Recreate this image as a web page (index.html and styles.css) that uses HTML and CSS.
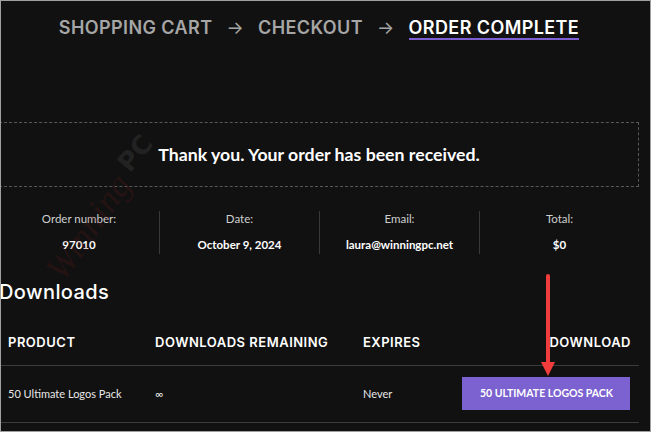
FILE: index.html
```html
<!DOCTYPE html>
<html lang="en">
<head>
  <meta charset="UTF-8" />
  <title>Order Complete</title>
  <link rel="stylesheet" href="styles.css">
</head>
<body>
  <div class="page">
    <nav class="steps">
      <span class="step">Shopping Cart</span>
      <span class="sep">&rarr;</span>
      <span class="step">Checkout</span>
      <span class="sep">&rarr;</span>
      <span class="step active">Order Complete</span>
    </nav>

    <p class="notice">Thank you. Your order has been received.</p>

    <ul class="overview">
      <li>Order number:<strong>97010</strong></li>
      <li>Date:<strong>October 9, 2024</strong></li>
      <li>Email:<strong>laura@winningpc.net</strong></li>
      <li>Total:<strong>$0</strong></li>
    </ul>

    <h2 class="section-title">Downloads</h2>

    <div class="downloads">
      <div class="th">Product</div>
      <div class="th">Downloads remaining</div>
      <div class="th">Expires</div>
      <div class="th th-end">Download</div>

      <div class="td">50 Ultimate Logos Pack</div>
      <div class="td">&infin;</div>
      <div class="td">Never</div>
      <div class="td td-end"><a class="btn" href="#">50 Ultimate Logos Pack</a></div>
    </div>
  </div>

  <!-- screenshot watermark + annotation -->
  <span class="wm wm-script">Winning</span>
  <span class="wm wm-pc">PC</span>
  <svg class="pointer" width="20" height="110" viewBox="0 0 20 110">
    <line x1="10" y1="3" x2="10" y2="92" stroke="#f03c3c" stroke-width="4" stroke-linecap="round"/>
    <polygon points="3,89 17,89 10,103" fill="#f03c3c"/>
  </svg>
  <div class="frame"></div>
</body>
</html>
```

FILE: styles.css
```css
html, body {
  margin: 0;
  padding: 0;
  background: #111111;
}
body {
  font-family: Lato, "Open Sans", sans-serif;
  color: #fff;
  width: 651px;
  height: 432px;
  overflow: hidden;
  position: relative;
}
.frame {
  position: absolute;
  inset: 0;
  border: 1px solid #a0a0a0;
  pointer-events: none;
}
.page {
  width: 640px;
  margin-left: -1px;
}

/* steps */
.steps {
  display: flex;
  justify-content: center;
  align-items: flex-start;
  gap: 14px;
  padding-top: 18px;
  font-family: Inter, "Open Sans", sans-serif;
  font-weight: 600;
  font-size: 18px;
  line-height: 20px;
  letter-spacing: 0.4px;
  text-transform: uppercase;
  color: #a6a6a6;
}
.step {
  border-bottom: 2px solid transparent;
}
.step.active {
  color: #fff;
  border-bottom-color: #7b5fd3;
}
.sep {
  font-weight: 400;
}

/* thank you */
.notice {
  margin: 82px 0 0;
  height: 63px;
  border: 1px dashed #585858;
  display: flex;
  align-items: center;
  justify-content: center;
  font-size: 17.7px;
  font-weight: 700;
  line-height: 22px;
}

/* order overview */
.overview {
  list-style: none;
  margin: 24px 0 0;
  padding: 0;
  display: grid;
  grid-template-columns: repeat(4, 1fr);
}
.overview li {
  display: flex;
  flex-direction: column;
  align-items: center;
  font-size: 11.5px;
  line-height: 16px;
  color: #cfcfcf;
  padding-bottom: 1px;
}
.overview li + li {
  border-left: 1px solid #3a3a3a;
}
.overview strong {
  margin-top: 10px;
  color: #fff;
  font-weight: 700;
}

/* downloads */
.section-title {
  margin: 26px 0 0;
  font-family: Inter, "Open Sans", sans-serif;
  font-weight: 500;
  font-size: 20px;
  line-height: 24px;
  letter-spacing: 0.4px;
}
.downloads {
  display: grid;
  grid-template-columns: 147px 208px 1fr auto;
  margin-top: 20px;
}
.th {
  padding: 10px 9px 15px;
  border-bottom: 1px solid #3c3c3c;
  font-family: Inter, "Open Sans", sans-serif;
  font-weight: 600;
  font-size: 13px;
  line-height: 16px;
  letter-spacing: 0.5px;
  text-transform: uppercase;
}
.td {
  display: flex;
  align-items: center;
  padding: 11px 9px 12px;
  border-bottom: 1px solid #3c3c3c;
  font-size: 11px;
  color: #e8e8e8;
}
.th-end, .td-end {
  justify-content: flex-end;
  text-align: right;
}
.th-end {
  padding-right: 8px;
}
.btn {
  display: block;
  height: 33px;
  line-height: 33px;
  padding: 0 17px 0 18px;
  background: #7c62d1;
  color: #fff;
  font-size: 10.5px;
  font-weight: 700;
  text-transform: uppercase;
  text-decoration: none;
}

/* overlays */
.wm {
  position: absolute;
  pointer-events: none;
  white-space: nowrap;
}
.wm-script {
  left: 28px;
  top: 206px;
  font-family: "Liberation Serif", serif;
  font-style: italic;
  font-size: 36px;
  color: rgba(110, 30, 30, 0.22);
  transform: rotate(-55deg);
}
.wm-pc {
  left: 116px;
  top: 138px;
  font-family: "DejaVu Sans", sans-serif;
  font-weight: 700;
  font-size: 26px;
  color: rgba(80, 80, 80, 0.3);
  transform: rotate(-50deg);
}
.pointer {
  position: absolute;
  left: 538px;
  top: 273px;
}
```
